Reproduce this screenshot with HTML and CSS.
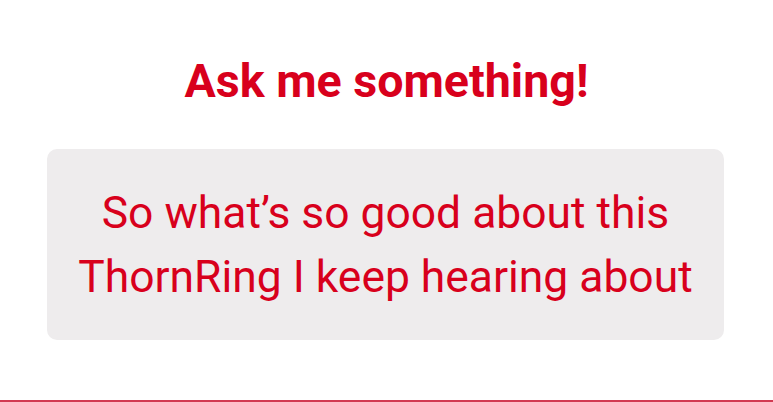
FILE: index.html
```html
<!DOCTYPE html>
<html>
<head>
<meta charset="utf-8">
<link rel="stylesheet" href="styles.css">
</head>
<body>
<main class="page">
  <h1 class="title">Ask me something!</h1>
  <div class="card">
    <p class="question">So what’s so good about this ThornRing I keep hearing about</p>
  </div>
  <div class="spacer"></div>
  <div class="rule"></div>
</main>
</body>
</html>
```
FILE: styles.css
```css
html, body {
  margin: 0;
  padding: 0;
  background: #ffffff;
}
.page {
  height: 402px;
  display: flex;
  flex-direction: column;
  align-items: stretch;
  font-family: Roboto, "Noto Sans", sans-serif;
  color: #d8001c;
}
.title {
  margin: 56px 0 0;
  text-align: center;
  font-size: 46.6px;
  line-height: 50px;
  font-weight: 700;
}
.card {
  margin: 43px 49px 0 47px;
  height: 191px;
  box-sizing: border-box;
  background: #eeeced;
  border-radius: 10px;
  display: flex;
  align-items: center;
  justify-content: center;
  padding: 0 20px;
}
.question {
  margin: 0;
  text-align: center;
  font-size: 44.4px;
  line-height: 64px;
  font-weight: 400;
}
.spacer {
  flex: 1;
}
.rule {
  height: 2px;
  background: #d23a52;
}
```
